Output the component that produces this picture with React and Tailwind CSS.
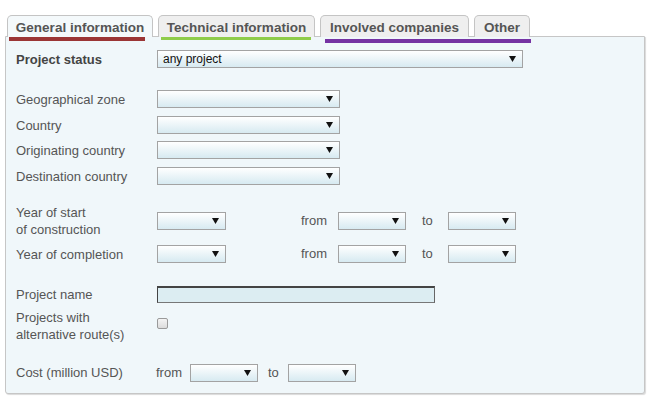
const font = { fontFamily: '"Liberation Sans", Arial, sans-serif' }

function Arrow() {
  return (
    <svg width="7" height="6" viewBox="0 0 7 6" className="shrink-0">
      <path d="M0 0H7L3.5 6Z" fill="#111" />
    </svg>
  )
}

function FakeSelect({ width, value = '' }) {
  return (
    <div
      className="box-border flex h-[18px] shrink-0 items-center justify-between border border-[#a3a3a3] bg-gradient-to-b from-white to-[#d7eaf1] pl-[5px] pr-[6px] text-[12px] text-[#111]"
      style={{ width }}
    >
      <span>{value}</span>
      <Arrow />
    </div>
  )
}

function Row({ label, className = '', children, bold = false }) {
  return (
    <div className={`flex items-center ${className}`}>
      <div
        className={`w-[141px] shrink-0 leading-[17px] ${bold ? 'text-[13px] font-bold text-[#444]' : 'text-[13px] text-[#555]'}`}
      >
        {label}
      </div>
      {children}
    </div>
  )
}

function RangePair() {
  return (
    <>
      <span className="ml-[75px] w-[27px] text-[13px] text-[#555]">from</span>
      <span className="ml-[10px]">
        <FakeSelect width={68} />
      </span>
      <span className="ml-[16px] w-[11px] text-[13px] text-[#555]">to</span>
      <span className="ml-[15px]">
        <FakeSelect width={68} />
      </span>
    </>
  )
}

const TABS = [
  { label: 'General information', width: 146, active: true },
  { label: 'Technical information', width: 157 },
  { label: 'Involved companies', width: 149 },
  { label: 'Other', width: 56 },
]

export default function App() {
  return (
    <div className="h-[400px] w-[650px] bg-white px-[5px] pt-[15px]" style={font}>
      <div className="flex gap-[5px] pl-[2px]">
        {TABS.map((tab) => (
          <div
            key={tab.label}
            className={`relative z-10 box-border flex h-[22px] items-center justify-center rounded-t-[5px] border border-b-0 border-[#c4c4c4] pt-[3px] text-[13.5px] font-bold text-[#555] ${
              tab.active ? 'bg-[#f4f9fb]' : 'bg-[#efefef]'
            }`}
            style={{ width: tab.width }}
          >
            {tab.label}
          </div>
        ))}
      </div>

      <div className="-mt-px box-border h-[358px] rounded-b-[3px] border border-[#c6c6c6] bg-[#f0f7fa] shadow-[1px_1px_1px_rgba(0,0,0,0.15)]">
        <div className="flex items-start">
          <div className="ml-[3px] h-[4px] w-[136px] bg-[#9b3535]" />
          <div className="ml-[16px] h-[3px] w-[150px] bg-[#8fcc4a]" />
          <div className="ml-[14px] mt-[2px] h-[4px] w-[206px] bg-[#7633a3]" />
        </div>

        <div className="pl-[10px]">
          <Row label="Project status" bold className="mt-[7px] h-[18px]">
            <FakeSelect width={366} value="any project" />
          </Row>

          <Row label="Geographical zone" className="mt-[22px] h-[18px]">
            <FakeSelect width={183} />
          </Row>
          <Row label="Country" className="mt-[8px] h-[18px]">
            <FakeSelect width={183} />
          </Row>
          <Row label="Originating country" className="mt-[7px] h-[18px]">
            <FakeSelect width={183} />
          </Row>
          <Row label="Destination country" className="mt-[8px] h-[18px]">
            <FakeSelect width={183} />
          </Row>

          <Row
            label={
              <>
                Year of start
                <br />
                of construction
              </>
            }
            className="mt-[19px] h-[34px]"
          >
            <FakeSelect width={69} />
            <RangePair />
          </Row>
          <Row label="Year of completion" className="mt-[7px] h-[18px]">
            <FakeSelect width={69} />
            <RangePair />
          </Row>

          <Row label="Project name" className="mt-[23px] h-[17px]">
            <div className="box-border h-[17px] w-[278px] border border-t-2 border-[#444] border-b-[#777] border-r-[#666] bg-[#dcedf2]" />
          </Row>
          <Row
            label={
              <>
                Projects with
                <br />
                alternative route(s)
              </>
            }
            className="mt-[5px] h-[36px]"
          >
            <div className="-mt-[5px] box-border h-[11px] w-[11px] rounded-[2px] border border-[#9a9a9a] bg-gradient-to-b from-[#f4f4f4] to-[#dcdcdc]" />
          </Row>

          <div className="mt-[20px] flex h-[18px] items-center text-[13px] text-[#555]">
            <span className="w-[140px] shrink-0">Cost (million USD)</span>
            <span className="w-[27px]">from</span>
            <span className="ml-[7px]">
              <FakeSelect width={68} />
            </span>
            <span className="ml-[10px] w-[11px]">to</span>
            <span className="ml-[9px]">
              <FakeSelect width={68} />
            </span>
          </div>
        </div>
      </div>
    </div>
  )
}
